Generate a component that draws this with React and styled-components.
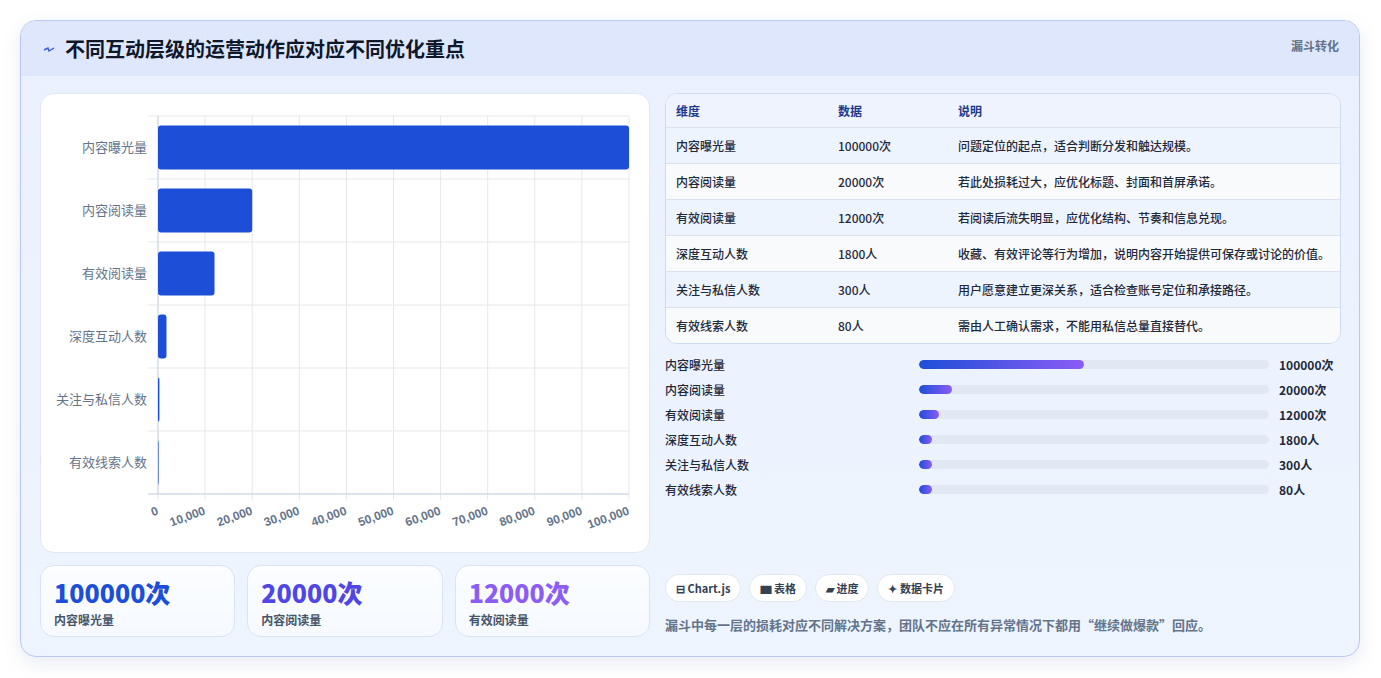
import React from "react";
import styled, { createGlobalStyle } from "styled-components";

const G = createGlobalStyle`
  body{margin:0;background:#fff;font-family:"Noto Sans CJK SC","Noto Sans",sans-serif;color:#1e293b;}
`;
const Page = styled.div`padding:20px 21px 21px 20px;`;
const Card = styled.div`
  height:637px;box-sizing:border-box;border:1px solid #b9c8ef;border-radius:16px;overflow:hidden;
  background:linear-gradient(180deg,#eaf0fe,#eef5fe);box-shadow:0 6px 18px rgba(100,120,180,.15);
  display:flex;flex-direction:column;
`;
const Header = styled.div`
  height:55px;flex:none;background:#dfe7fd;display:flex;align-items:center;justify-content:space-between;
  padding:0 20px 0 22px;
`;
const Title = styled.h1`margin:0;font-size:20px;font-weight:700;color:#0f172a;display:flex;align-items:center;gap:10px;`;
const Badge = styled.span`font-size:12px;font-weight:700;color:#64748b;align-self:flex-start;margin-top:16px;`;
const Body = styled.div`flex:1;display:grid;grid-template-columns:610px 1fr;gap:15px;padding:17px 18px 18px 19px;`;
const Left = styled.div`display:flex;flex-direction:column;gap:12px;`;
const ChartCard = styled.div`height:460px;box-sizing:border-box;background:#fff;border:1px solid #e2e8f0;border-radius:14px;`;
const Stats = styled.div`display:grid;grid-template-columns:repeat(3,1fr);gap:12px;`;
const Stat = styled.div`height:72px;box-sizing:border-box;background:linear-gradient(180deg,#fbfdff,#f6faff);border:1px solid #dbe4f3;border-radius:14px;padding:9px 13px;`;
const StatVal = styled.div`font-size:25px;font-weight:800;color:${p => p.c};line-height:34px;`;
const StatLab = styled.div`font-size:12px;font-weight:600;color:#475569;margin-top:2px;`;
const Right = styled.div`display:flex;flex-direction:column;`;
const Table = styled.div`border:1px solid #cfdaf0;border-radius:12px;overflow:hidden;background:#fff;`;
const Row = styled.div`
  display:grid;grid-template-columns:162px 120px 1fr;align-items:center;padding-left:10px;
  height:${p => p.h ? 33 : 35}px;font-size:12px;
  background:${p => p.h ? "#eef3fe" : p.alt ? "#f8fafc" : "#eef4fe"};
  color:${p => p.h ? "#1e3a8a" : "#1e293b"};font-weight:${p => p.h ? 700 : 500};
  border-top:${p => p.h ? "none" : "1px solid #dbe3f1"};
`;
const Bars = styled.div`margin-top:12px;display:flex;flex-direction:column;gap:9px;`;
const BarRow = styled.div`display:grid;grid-template-columns:254px 350px 1fr;gap:0;align-items:center;height:16px;font-size:12px;`;
const BarLab = styled.span`color:#1e293b;font-weight:500;`;
const Track = styled.div`height:9px;border-radius:5px;background:#e2e8f3;overflow:hidden;`;
const Fill = styled.div`height:100%;border-radius:5px;background:linear-gradient(90deg,#1d4ed8,#8b5cf6);`;
const BarVal = styled.span`font-weight:700;color:#1e293b;padding-left:10px;`;
const Spacer = styled.div`flex:1;`;
const Chips = styled.div`display:flex;gap:8px;`;
const Chip = styled.span`height:28px;box-sizing:border-box;padding:0 10px;border:1px solid #e2e8f0;border-radius:14px;background:#fff;font-size:11px;font-weight:700;color:#334155;display:flex;align-items:center;gap:4px;`;
const Note = styled.p`margin:13px 0 4px;font-size:13px;font-weight:600;color:#64748b;`;

const data = [
  ["内容曝光量", 100000, "100000次", "问题定位的起点，适合判断分发和触达规模。", 47],
  ["内容阅读量", 20000, "20000次", "若此处损耗过大，应优化标题、封面和首屏承诺。", 9.4],
  ["有效阅读量", 12000, "12000次", "若阅读后流失明显，应优化结构、节奏和信息兑现。", 5.7],
  ["深度互动人数", 1800, "1800人", "收藏、有效评论等行为增加，说明内容开始提供可保存或讨论的价值。", 3.7],
  ["关注与私信人数", 300, "300人", "用户愿意建立更深关系，适合检查账号定位和承接路径。", 3.7],
  ["有效线索人数", 80, "80人", "需由人工确认需求，不能用私信总量直接替代。", 3.7],
];

function Chart() {
  const x0 = 117, w = 471, y0 = 22, band = 63;
  const ticks = [...Array(11)].map((_, i) => i);
  return (
    <svg width="608" height="458">
      {ticks.map(i => <line key={i} x1={x0 + i * w / 10} x2={x0 + i * w / 10} y1={y0} y2={y0 + band * 6 + 6} stroke="#e5e7eb" />)}
      {[...Array(7)].map((_, i) => <line key={i} x1={x0 - 10} x2={x0 + w} y1={y0 + i * band} y2={y0 + i * band} stroke="#e5e7eb" />)}
      <line x1={x0} x2={x0} y1={y0} y2={y0 + band * 6} stroke="#cbd5e1" />
      <line x1={x0 - 10} x2={x0 + w} y1={y0 + band * 6} y2={y0 + band * 6} stroke="#cbd5e1" />
      {data.map((d, i) => (
        <g key={i}>
          <rect x={x0} y={y0 + i * band + 9.5} width={Math.max(d[1] / 100000 * w, 0.6)} height={44} rx="3" fill="#1d4ed8" />
          <text x={x0 - 11} y={y0 + i * band + 36} textAnchor="end" fontSize="13" fill="#64748b" fontFamily="Noto Sans CJK SC">{d[0]}</text>
        </g>
      ))}
      {ticks.map(i => (
        <text key={i} transform={`translate(${x0 + i * w / 10 + 1},${y0 + band * 6 + 20}) rotate(-20)`} textAnchor="end" fontSize="12" fontWeight="700" fill="#64748b" fontFamily="Liberation Sans">{(i * 10000).toLocaleString("en-US")}</text>
      ))}
    </svg>
  );
}

export default function App() {
  return (
    <Page>
      <G />
      <Card>
        <Header>
          <Title><svg width="12" height="10" viewBox="0 0 12 10"><path d="M1 6 L5 4 L6 7 L11 4" stroke="#3b5bdb" strokeWidth="1.4" fill="none" /></svg>不同互动层级的运营动作应对应不同优化重点</Title>
          <Badge>漏斗转化</Badge>
        </Header>
        <Body>
          <Left>
            <ChartCard><Chart /></ChartCard>
            <Stats>
              <Stat><StatVal c="#1d4ed8">100000次</StatVal><StatLab>内容曝光量</StatLab></Stat>
              <Stat><StatVal c="#4f46e5">20000次</StatVal><StatLab>内容阅读量</StatLab></Stat>
              <Stat><StatVal c="#8b5cf6">12000次</StatVal><StatLab>有效阅读量</StatLab></Stat>
            </Stats>
          </Left>
          <Right>
            <Table>
              <Row h><span>维度</span><span>数据</span><span>说明</span></Row>
              {data.map((d, i) => <Row key={i} alt={i % 2 === 1}><span>{d[0]}</span><span>{d[2]}</span><span>{d[3]}</span></Row>)}
            </Table>
            <Bars>
              {data.map((d, i) => (
                <BarRow key={i}><BarLab>{d[0]}</BarLab><Track><Fill style={{ width: d[4] + "%" }} /></Track><BarVal>{d[2]}</BarVal></BarRow>
              ))}
            </Bars>
            <Spacer />
            <Chips>
              <Chip>⊟ Chart.js</Chip><Chip>▆ 表格</Chip><Chip>▰ 进度</Chip><Chip>✦ 数据卡片</Chip>
            </Chips>
            <Note>漏斗中每一层的损耗对应不同解决方案，团队不应在所有异常情况下都用“继续做爆款”回应。</Note>
          </Right>
        </Body>
      </Card>
    </Page>
  );
}
